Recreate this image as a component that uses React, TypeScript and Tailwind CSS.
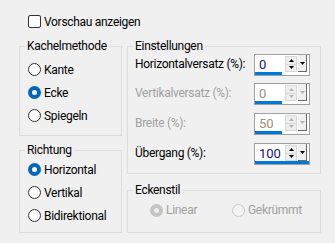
import React from 'react';

const GroupBox = ({
  title,
  className,
  children,
}: {
  title: string;
  className: string;
  children: React.ReactNode;
}) => (
  <fieldset className={`border border-[#dcdcdc] ${className}`}>
    <legend className="ml-[5px] px-[2px] leading-[16px]">{title}</legend>
    {children}
  </fieldset>
);

const Radio = ({ checked, disabled }: { checked?: boolean; disabled?: boolean }) => {
  if (checked) {
    return (
      <span
        className={`flex h-[13px] w-[13px] shrink-0 items-center justify-center rounded-full ${
          disabled ? 'bg-[#c4c4c4]' : 'bg-[#0067c0]'
        }`}
      >
        <span className={`h-[5px] w-[5px] rounded-full ${disabled ? 'bg-[#ececec]' : 'bg-white'}`} />
      </span>
    );
  }
  return (
    <span
      className={`h-[13px] w-[13px] shrink-0 rounded-full border ${
        disabled ? 'border-[#c8c8c8] bg-[#f3f3f3]' : 'border-[#333333] bg-white'
      }`}
    />
  );
};

const RadioRow = ({ label, checked }: { label: string; checked?: boolean }) => (
  <div className="flex h-[23px] items-center gap-[3px] pl-[8px]">
    <Radio checked={checked} />
    <span>{label}</span>
  </div>
);

const Arrow = ({ up, color }: { up?: boolean; color: string }) => (
  <svg width="5" height="3" viewBox="0 0 5 3">
    <path d={up ? 'M0 3 L2.5 0 L5 3 Z' : 'M0 0 L2.5 3 L5 0 Z'} fill={color} />
  </svg>
);

const Spinner = ({
  value,
  disabled,
  full,
}: {
  value: string;
  disabled?: boolean;
  full?: boolean;
}) => {
  const arrow = disabled ? '#b4b4b4' : '#000000';
  return (
    <div className="flex h-[22px] w-[56px] flex-col border border-[#a0a0a0] bg-white">
      <div className="flex h-[17px]">
        <div
          className={`flex-1 pl-[4px] pt-[1px] text-[13px] leading-[17px] tracking-normal ${
            disabled ? 'text-[#a09080]' : 'text-[#14147a]'
          }`}
        >
          {value}
        </div>
        <div className="mt-[1px] flex h-[16px] w-[12px] flex-col border border-[#d8d8d8]">
          <div className="flex flex-1 items-center justify-center bg-[#eeeeee]">
            <Arrow up color={arrow} />
          </div>
          <div className="flex flex-1 items-center justify-center border-t border-[#d8d8d8] bg-[#eeeeee]">
            <Arrow color={arrow} />
          </div>
        </div>
        <div className="ml-[1px] mr-[2px] flex w-[9px] items-center justify-center border-b border-r border-[#696969] bg-[#f0f0f0]">
          <Arrow color={arrow} />
        </div>
      </div>
      <div className={`mt-auto h-[3px] bg-[#0078d7] ${full ? 'w-full' : 'w-[27px]'}`} />
    </div>
  );
};

const SettingRow = ({
  label,
  value,
  disabled,
  full,
  className,
}: {
  label: string;
  value: string;
  disabled?: boolean;
  full?: boolean;
  className: string;
}) => (
  <div className={`flex h-[22px] items-center justify-between pl-[7px] pr-[10px] ${className}`}>
    <span className={`-mt-[2px] ${disabled ? 'text-[#a0a0a0]' : 'text-black'}`}>{label}</span>
    <Spinner value={value} disabled={disabled} full={full} />
  </div>
);

export default function App() {
  return (
    <div className="h-[243px] w-[335px] overflow-hidden whitespace-nowrap bg-[#f0f0f0] pt-[15px] font-['Roboto',sans-serif] text-[12px] tracking-[-0.3px] text-black">
      <div className="flex h-[13px] items-center gap-[3px] pl-[28px]">
        <span className="h-[13px] w-[13px] rounded-[2px] border border-[#333333] bg-white" />
        <span>Vorschau anzeigen</span>
      </div>

      <div className="mt-[10px] flex gap-[5px] pl-[19px]">
        <div className="flex w-[103px] flex-col">
          <GroupBox title="Kachelmethode" className="h-[98px] pt-[4px]">
            <RadioRow label="Kante" />
            <RadioRow label="Ecke" checked />
            <RadioRow label="Spiegeln" />
          </GroupBox>
          <GroupBox title="Richtung" className="mt-[6px] h-[91px]">
            <RadioRow label="Horizontal" checked />
            <RadioRow label="Vertikal" />
            <RadioRow label="Bidirektional" />
          </GroupBox>
        </div>

        <div className="flex w-[194px] flex-col">
          <GroupBox title="Einstellungen" className="h-[136px]">
            <SettingRow label="Horizontalversatz (%):" value="0" className="" />
            <SettingRow label="Vertikalversatz (%):" value="0" disabled className="mt-[7px]" />
            <SettingRow label="Breite (%):" value="50" disabled className="mt-[8px]" />
            <SettingRow label="Übergang (%):" value="100" full className="mt-[8px]" />
          </GroupBox>
          <GroupBox title="Eckenstil" className="mt-[8px] h-[51px] pt-[5px]">
            <div className="flex h-[14px] items-center pl-[22px] text-[#a0a0a0]">
              <div className="flex w-[82px] items-center gap-[3px]">
                <Radio checked disabled />
                <span>Linear</span>
              </div>
              <div className="flex items-center gap-[3px]">
                <Radio disabled />
                <span>Gekrümmt</span>
              </div>
            </div>
          </GroupBox>
        </div>
      </div>
    </div>
  );
}
